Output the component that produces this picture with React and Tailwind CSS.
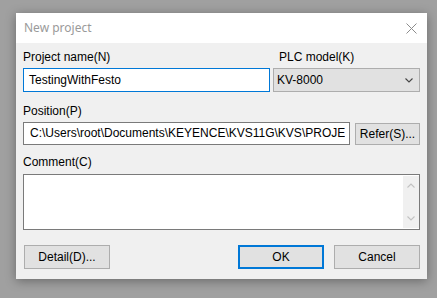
const FONT = { fontFamily: '"Liberation Sans", Arial, sans-serif' }

function Chevron({ up = false, color = '#555' }) {
  return (
    <svg width="8" height="5" viewBox="0 0 8 5" className="block">
      <path d={up ? 'M0.5 4.5 L4 1 L7.5 4.5' : 'M0.5 0.5 L4 4 L7.5 0.5'} fill="none" stroke={color} strokeWidth="1.1" />
    </svg>
  )
}

function Button({ children, primary = false, className = '' }) {
  return (
    <div
      className={`h-[24px] w-[86px] flex items-center justify-center bg-[#e1e1e1] text-[12px] text-black ${primary ? 'border-2 border-[#0078d7]' : 'border border-[#adadad]'} ${className}`}
    >
      {children}
    </div>
  )
}

export default function App() {
  return (
    <div className="w-[437px] h-[298px] bg-[#a0a0a0] overflow-hidden pt-[13px] pl-[16px]" style={FONT}>
      <div className="w-[411px] h-[266px] flex flex-col shadow-[0_2px_10px_rgba(0,0,0,0.35)]">
        {/* title bar */}
        <div className="h-[30px] bg-white flex items-center justify-between pl-[8px] pr-[10px]">
          <span className="text-[12px] text-[#9a9a9a]" style={{ fontFamily: '"Noto Sans", "Open Sans", sans-serif' }}>New project</span>
          <svg width="11" height="11" viewBox="0 0 11 11" className="block">
            <path d="M0.5 0.5 L10.5 10.5 M10.5 0.5 L0.5 10.5" stroke="#8c8c8c" strokeWidth="1" />
          </svg>
        </div>

        {/* body */}
        <div className="flex-1 bg-[#f0f0f0] px-[7px] pt-[7px] flex flex-col text-[12px] text-black leading-[15px]">
          <div className="flex gap-[3px]">
            <div className="w-[247px] flex flex-col">
              <div className="h-[18px]">Project name(N)</div>
              <div className="h-[24px] border border-[#0078d7] bg-white pl-[5px] flex items-center">TestingWithFesto</div>
            </div>
            <div className="w-[147px] flex flex-col">
              <div className="h-[18px] pl-[6px]">PLC model(K)</div>
              <div className="h-[24px] border border-[#adadad] bg-[#e1e1e1] pl-[3px] pr-[6px] flex items-center justify-between">
                <span>KV-8000</span>
                <Chevron color="#444" />
              </div>
            </div>
          </div>

          <div className="mt-[12px] h-[18px]">Position(P)</div>
          <div className="flex gap-[5px]">
            <div className="w-[327px] h-[23px] border border-[#7a7a7a] bg-white pl-[6px] flex items-center overflow-hidden whitespace-nowrap">
              <span className="block overflow-hidden">C:\Users\root\Documents\KEYENCE\KVS11G\KVS\PROJE</span>
            </div>
            <Button className="!w-[65px] !h-[22px] mt-[1px]">Refer(S)...</Button>
          </div>

          <div className="mt-[10px] h-[19px]">Comment(C)</div>
          <div className="w-[397px] h-[56px] border border-[#7a7a7a] bg-white flex justify-end">
            <div className="w-[16px] mt-[1px] mb-[1px] bg-[#f0f0f0] flex flex-col items-center justify-between py-[7px]">
              <Chevron up color="#c2c2c2" />
              <Chevron color="#c2c2c2" />
            </div>
          </div>

          <div className="mt-[15px] flex items-center">
            <Button className="ml-[1px]">Detail(D)...</Button>
            <div className="flex-1" />
            <Button primary>OK</Button>
            <Button className="ml-[10px]">Cancel</Button>
          </div>
        </div>
      </div>
    </div>
  )
}
